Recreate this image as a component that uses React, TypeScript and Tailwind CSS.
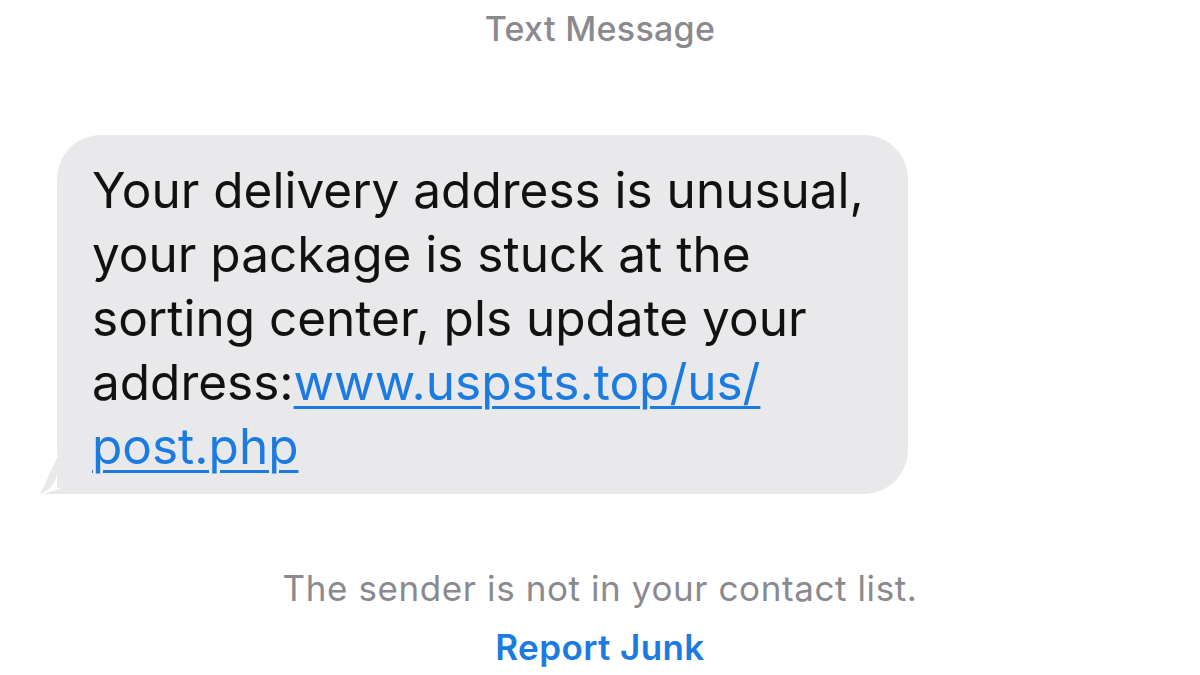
import React from 'react';

const App: React.FC = () => {
  return (
    <div
      className="w-[1200px] h-[675px] bg-white overflow-hidden flex flex-col"
      style={{ fontFamily: 'Inter, "Noto Sans", sans-serif' }}
    >
      {/* Header */}
      <div className="h-[56px] flex items-center justify-center">
        <span className="text-[34px] font-medium text-[#8a8a8e] tracking-[0.3px]">Text Message</span>
      </div>

      {/* Bubble */}
      <div className="pl-[57px] pt-[79px]">
        <div className="relative w-[851px] bg-[#e9e9eb] rounded-[44px] pl-[35px] pr-[20px] pt-[23px] pb-[16px]">
          {/* tail */}
          <svg
            className="absolute left-[-17px] bottom-0"
            width="60"
            height="36"
            viewBox="0 0 60 36"
          >
            <path
              d="M17 0 L17 14 C17 24 10 32 0 36 L60 36 L60 30 L42 30 C36 30 31 27 28 26 C22 30 12 34 0 36 Z"
              fill="#e9e9eb"
            />
            <path d="M17 0 L17 30 L60 30 L60 0 Z" fill="#e9e9eb" />
          </svg>
          <p className="relative text-[49.5px] leading-[64px] text-[#111111] tracking-[0px]">
            Your delivery address is unusual,
            <br />
            your package is stuck at the
            <br />
            sorting center, pls update your
            <br />
            address:
            <span className="text-[#1b7be0] underline decoration-[3px] underline-offset-[6px]">www.uspsts.top/us/</span>
            <br />
            <span className="text-[#1b7be0] underline decoration-[3px] underline-offset-[6px]">post.php</span>
          </p>
        </div>
      </div>

      {/* Footer */}
      <div className="mt-[70px] flex flex-col items-center">
        <span className="text-[35px] leading-[48px] text-[#8a8a8e] tracking-[0.6px]">
          The sender is not in your contact list.
        </span>
        <span className="mt-[11px] text-[35px] leading-[48px] font-semibold text-[#1b7be0] tracking-[0.4px]">
          Report Junk
        </span>
      </div>
    </div>
  );
};

export default App;
